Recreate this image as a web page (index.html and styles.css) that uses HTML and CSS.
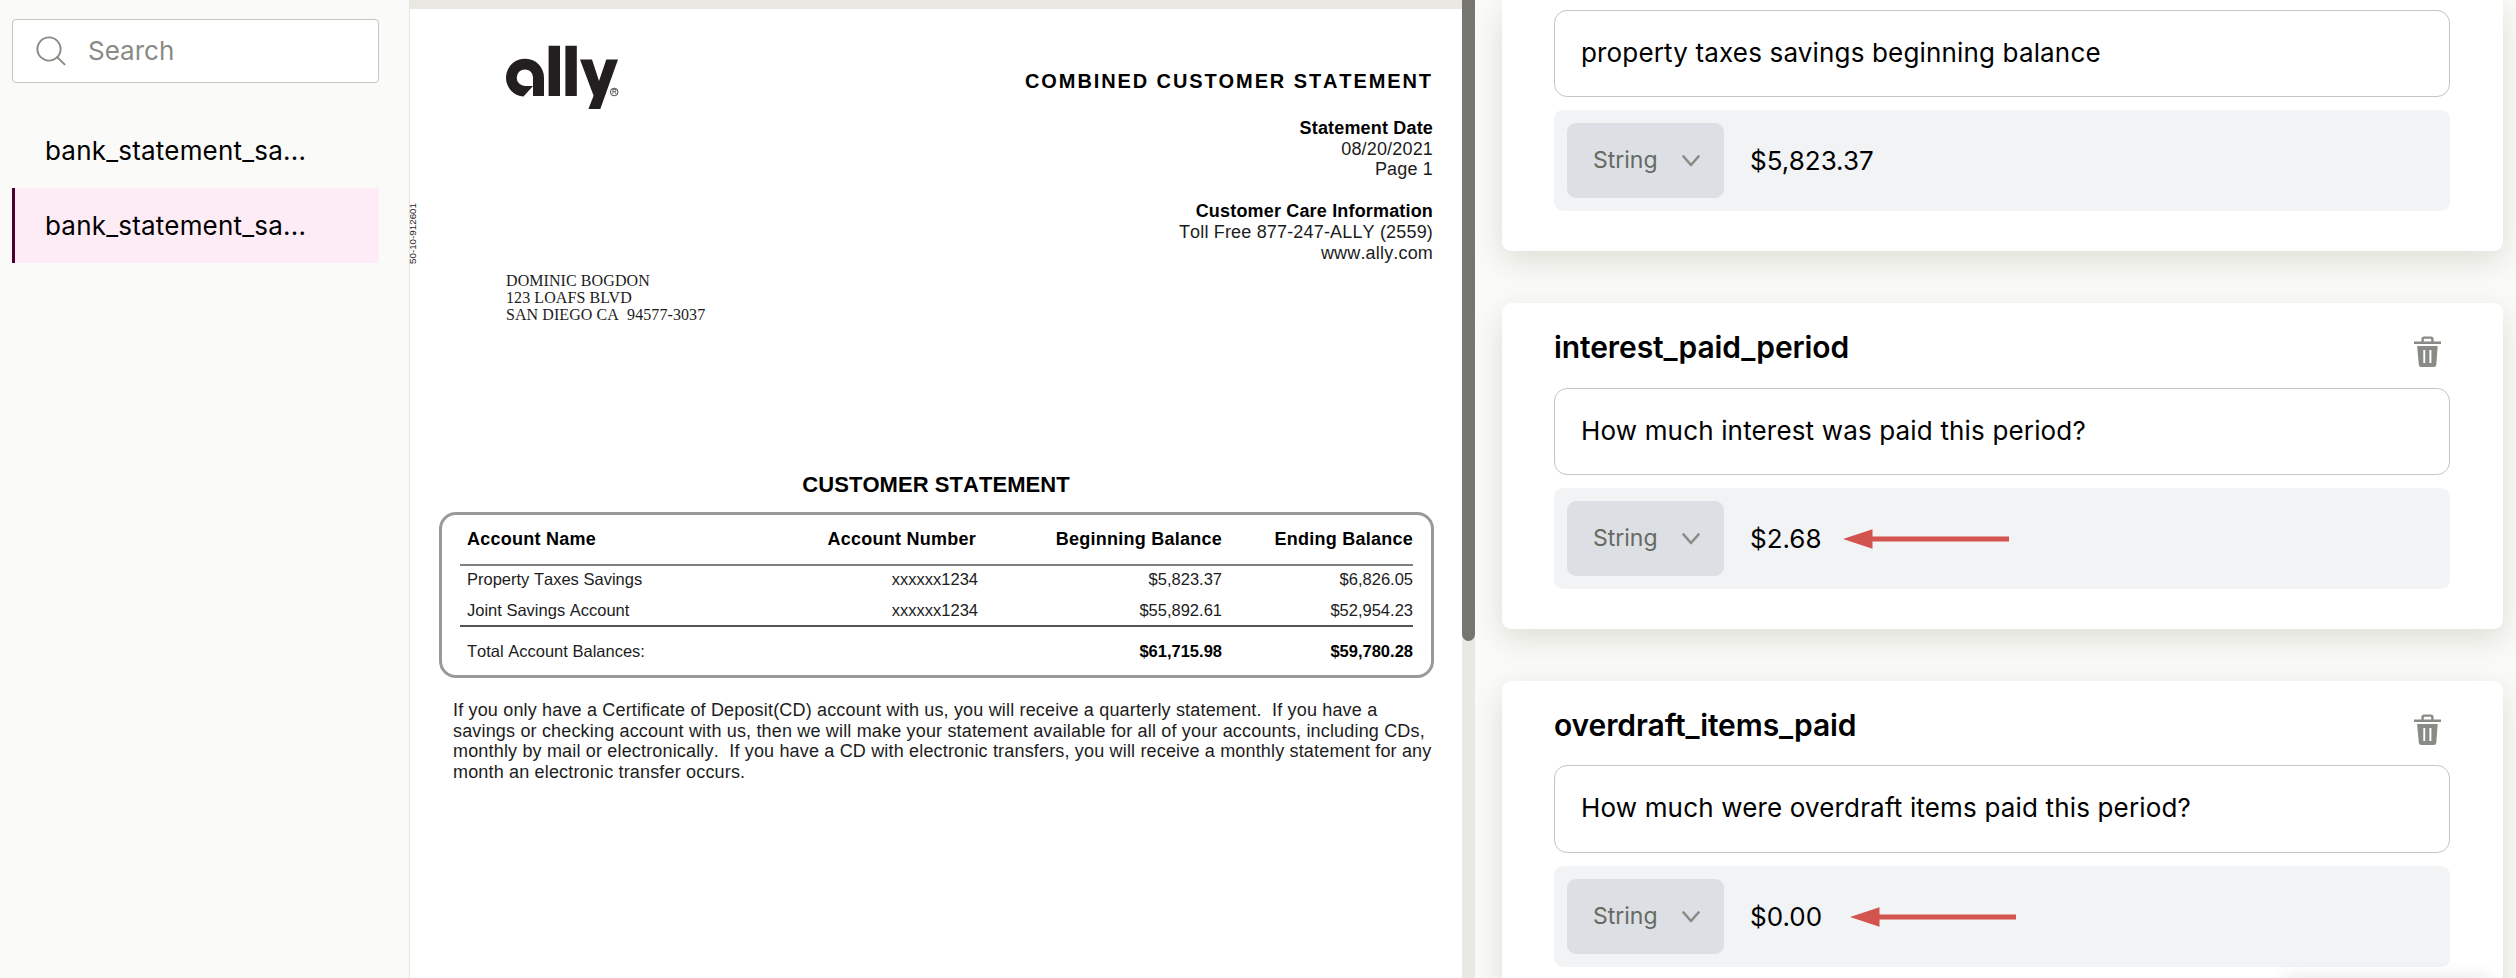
FILE: index.html
```
<!DOCTYPE html>
<html lang="en">
<head>
<meta charset="utf-8">
<title>Document review</title>
<link rel="stylesheet" href="styles.css">
</head>
<body>
<svg width="0" height="0" class="defs" aria-hidden="true">
  <symbol id="trash" viewBox="0 0 28 32">
    <path fill-rule="evenodd" d="M7.4 5.6V3.3Q7.4 .4 10.2 .4H16.8Q19.6 .4 19.6 3.3V5.6H27V8H0V5.6ZM9.8 5.6H17.2V3.4Q17.2 2.7 16.5 2.7H10.5Q9.8 2.7 9.8 3.4ZM3.1 10H23.7L22.3 28.7Q22.1 31 19.8 31H7.2Q5 31 4.8 28.7ZM9.3 14V27H11.2V14ZM15.4 14V27H17.4V14Z"/>
  </symbol>
  <symbol id="chevron" viewBox="0 0 18 12">
    <path d="M1.5 1.5L9 10L16.5 1.5" fill="none" stroke="currentColor" stroke-width="2.6" stroke-linecap="round" stroke-linejoin="round"/>
  </symbol>
  <symbol id="arrow" viewBox="0 0 166 20">
    <path d="M0 10L29.5 0.3V7.5H166V12.5H29.5V19.7Z"/>
  </symbol>
</svg>
<div class="app">
  <aside class="sidebar">
    <label class="search">
      <svg width="30" height="30" viewBox="0 0 30 30"><circle cx="13" cy="13" r="11.6"/><path d="M21.2 21.2L28.6 28.4"/></svg>
      <span>Search</span>
    </label>
    <nav class="files">
      <a class="file">bank_statement_sa...</a>
      <a class="file active">bank_statement_sa...</a>
    </nav>
  </aside>

  <main class="viewer">
    <article class="page">
      <div class="side-code">50-10-912601</div>
      <header class="page-head">
        <div>
          <svg class="logo" width="114" height="66" viewBox="0 0 114 66">
            <path fill-rule="evenodd" d="M17.5 51.6A19 19 0 1 1 38 33V51H27V41ZM19 24.4A8.3 8.3 0 1 0 19 41H27V32.7A8 8 0 0 0 19 24.4Z"/>
            <path d="M42.6 .8H54V51H42.6ZM59.4 .8H70.8V51H59.4ZM74 14.6H86L93 36L100.3 14.6H112L94.3 64H82.4L87.6 50.8Z"/>
            <circle cx="108.2" cy="47" r="3.8" fill="none" stroke="#231f20" stroke-width=".8"/>
            <text x="105.9" y="49.4" font-size="6.5">R</text>
          </svg>
          <address>DOMINIC BOGDON<br>123 LOAFS BLVD<br>SAN DIEGO CA&nbsp; 94577-3037</address>
        </div>
        <div class="meta">
          <h1>COMBINED CUSTOMER STATEMENT</h1>
          <p><b>Statement Date</b><br>08/20/2021<br>Page 1</p>
          <p><b>Customer Care Information</b><br>Toll Free 877-247-ALLY (2559)<br>www.ally.com</p>
        </div>
      </header>
      <h2>CUSTOMER STATEMENT</h2>
      <section class="summary">
        <div class="row head"><span>Account Name</span><span>Account Number</span><span>Beginning Balance</span><span>Ending Balance</span></div>
        <div class="row first"><span>Property Taxes Savings</span><span>xxxxxx1234</span><span>$5,823.37</span><span>$6,826.05</span></div>
        <div class="row second"><span>Joint Savings Account</span><span>xxxxxx1234</span><span>$55,892.61</span><span>$52,954.23</span></div>
        <div class="row total"><span>Total Account Balances:</span><span></span><b>$61,715.98</b><b>$59,780.28</b></div>
      </section>
      <p class="note">If you only have a Certificate of Deposit(CD) account with us, you will receive a quarterly statement.&nbsp; If you have a<br>savings or checking account with us, then we will make your statement available for all of your accounts, including CDs,<br>monthly by mail or electronically.&nbsp; If you have a CD with electronic transfers, you will receive a monthly statement for any<br>month an electronic transfer occurs.</p>
    </article>
    <div class="scroll"><div class="thumb"></div></div>
  </main>

  <section class="fields">
    <div class="card clipped">
      <div class="query">property taxes savings beginning balance</div>
      <div class="answer"><div class="type">String<svg width="18" height="12"><use href="#chevron"/></svg></div><span>$5,823.37</span></div>
    </div>
    <div class="card">
      <div class="title"><h3>interest_paid_period</h3><svg width="28" height="32"><use href="#trash"/></svg></div>
      <div class="query">How much interest was paid this period?</div>
      <div class="answer"><div class="type">String<svg width="18" height="12"><use href="#chevron"/></svg></div><span>$2.68</span><svg class="arrow near" width="166" height="20"><use href="#arrow"/></svg></div>
    </div>
    <div class="card last">
      <div class="title"><h3>overdraft_items_paid</h3><svg width="28" height="32"><use href="#trash"/></svg></div>
      <div class="query">How much were overdraft items paid this period?</div>
      <div class="answer"><div class="type">String<svg width="18" height="12"><use href="#chevron"/></svg></div><span>$0.00</span><svg class="arrow far" width="166" height="20"><use href="#arrow"/></svg></div>
    </div>
  </section>
  <div class="floating"></div>
</div>
</body>
</html>
```
FILE: styles.css
```
* { box-sizing: border-box; }
body { margin: 0; background: #fafaf8; color: #000; font-family: Inter, sans-serif; }
h1, h2, h3, p { margin: 0; }
.defs { display: block; position: absolute; }
.app { position: relative; display: flex; width: 2516px; height: 978px; overflow: hidden; }

.sidebar { width: 410px; border-right: 1px solid #e6e5e0; padding: 19px 30px 0 12px; }
.search { display: flex; align-items: center; height: 64px; padding: 0 0 1px 23px; gap: 22px; background: #fff; border: 1px solid #c6c6be; border-radius: 4px; font-size: 26px; color: #888c84; }
.search svg { fill: none; stroke: #888c84; stroke-width: 1.9; stroke-linecap: round; }
.files { margin-top: 30px; }
.file { display: flex; align-items: center; height: 75px; padding-left: 30px; border-left: 3px solid transparent; font-size: 26px; font-weight: 380; letter-spacing: .2px; }
.file.active { background: #fdebf6; border-left-color: #4a0033; }

.viewer { width: 1065px; display: flex; }
.page { position: relative; width: 1052px; margin-top: 9px; padding: 36px 28px 0 29px; background: #fff; box-shadow: 0 -9px 0 #e8e7e1; font-family: "Liberation Sans", Arial, sans-serif; font-size: 18px; line-height: 20.7px; letter-spacing: .17px; font-kerning: none; color: #1c1c1c; }
.page h1, .page h2, .page b, .row.head { color: #000; }
.side-code { position: absolute; left: -2px; top: 194px; writing-mode: vertical-rl; transform: rotate(180deg); font-size: 9.8px; line-height: 10px; letter-spacing: 0; white-space: nowrap; }
.page-head { display: flex; justify-content: space-between; height: 427px; padding-left: 67px; }
.logo { display: block; fill: #231f20; }
address { margin-top: 161px; font: 16px/17px "Liberation Serif", "Times New Roman", serif; letter-spacing: .08px; }
.meta { text-align: right; margin-right: 1px; }
h1 { margin-top: 24px; font-size: 20px; line-height: 24px; letter-spacing: 1.9px; }
.meta p { margin-top: 25px; }
.meta p + p { margin-top: 21.2px; }
h2 { text-align: center; font-size: 22px; line-height: 26px; letter-spacing: .05px; margin-left: -1px; }
.summary { height: 166px; margin-top: 14px; border: 3px solid #999; border-radius: 17px; padding: 0 18px; }
.row { display: grid; grid-template-columns: 361px 150px 1fr 191px; padding: 0 0 0 7px; font-size: 16.5px; letter-spacing: 0; }
.row > :nth-child(n+2) { text-align: right; }
.row.head { grid-template-columns: 359px 150px 1fr 191px; height: 51px; padding-top: 14px; border-bottom: 2px solid #808080; font-size: 18px; font-weight: bold; letter-spacing: .25px; }
.first { height: 31px; padding-top: 3px; }
.second { height: 30px; padding-top: 3px; border-bottom: 2px solid #555; }
.total { padding-top: 14px; }
.note { margin: 22px 0 0 14px; white-space: nowrap; }
.scroll { width: 13px; background: #e9e8e3; }
.thumb { height: 641px; background: #777570; border-radius: 0 0 7px 7px; }

.fields { flex: 1; padding: 0 13px 0 27px; overflow: hidden; }
.card { height: 326px; margin-bottom: 52px; padding: 0 53px 0 52px; border-radius: 9px; background: #fff; box-shadow: 0 10px 30px #dfded6; }
.clipped { height: 251px; padding-top: 10px; border-radius: 0 0 9px 9px; }
.title { display: flex; justify-content: space-between; height: 85px; padding: 33px 8px 0 0; }
.title svg { fill: #888c84; }
h3 { margin-top: -7px; font-size: 30px; line-height: 36px; font-weight: 600; letter-spacing: -.1px; }
.query { height: 87px; padding-left: 26px; line-height: 84px; border: 1px solid #c6c6be; border-radius: 13px; font-size: 26px; font-weight: 380; letter-spacing: .16px; }
.last .title { height: 84px; }
.last .query { height: 88px; }
.answer { display: flex; align-items: center; height: 101px; margin-top: 13px; padding-left: 13px; border-radius: 9px; background: #f2f3f5; font-size: 26px; font-weight: 380; }
.answer > span { margin-left: 26px; }
.type { display: flex; align-items: center; justify-content: space-between; width: 157px; height: 75px; padding: 0 24px 1px 26px; border-radius: 9px; background: #dcdfe4; color: #666a63; font-size: 23px; }
.type svg { color: #888c84; margin-top: 1px; }
.arrow { fill: #d3534e; margin-left: 21px; }
.far { margin-left: 28px; }
.floating { position: absolute; left: 2284px; top: 980px; width: 206px; height: 60px; background: #fff; box-shadow: 0 0 20px rgba(0, 0, 0, .14); }
```
